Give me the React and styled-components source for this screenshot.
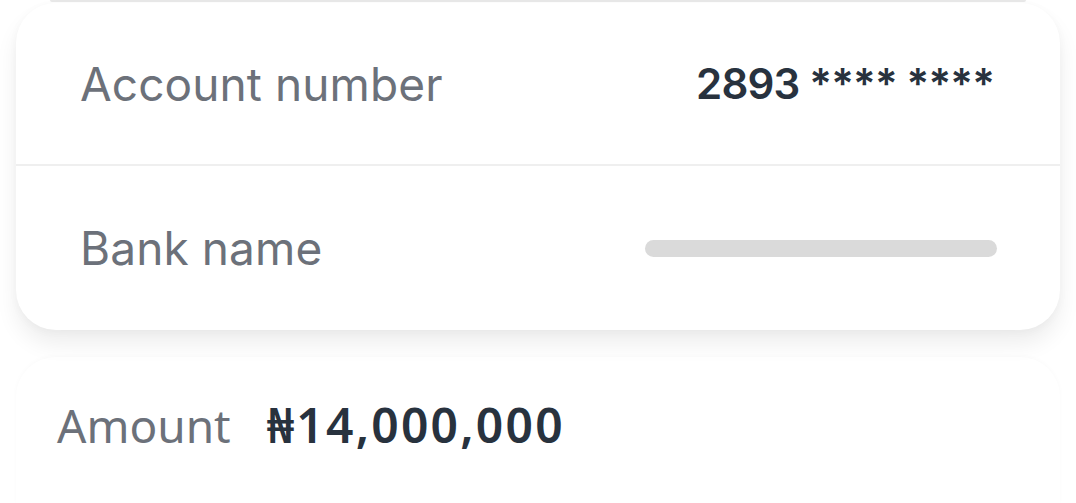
import React from "react";
import styled, { createGlobalStyle } from "styled-components";

const Global = createGlobalStyle`
  html, body {
    margin: 0;
    padding: 0;
    background: #ffffff;
    overflow: hidden;
  }
  body {
    font-family: Inter, "Noto Sans", sans-serif;
  }
`;

const Page = styled.div`
  width: 1076px;
  height: 503px;
  display: flex;
  flex-direction: column;
  box-sizing: border-box;
`;

// bottom edge of the card scrolled off above
const PrevEdge = styled.div`
  height: 2px;
  margin: 0 50px 0 50px;
  background: #e9e9e9;
  border-radius: 0 0 2px 2px;
`;

const Card = styled.div`
  margin: 1px 16px 0 16px;
  background: #ffffff;
  border-radius: 40px;
  box-shadow: 0 14px 22px rgba(0, 0, 0, 0.07), 0 2px 10px rgba(0, 0, 0, 0.03);
  display: flex;
  flex-direction: column;
`;

const Row = styled.div`
  height: ${(p) => p.h}px;
  display: flex;
  align-items: center;
  justify-content: space-between;
  padding: 0 63px 0 64px;
  border-top: ${(p) => (p.divider ? "2px solid #efefef" : "none")};
`;

const Label = styled.span`
  font-family: Inter, sans-serif;
  font-size: 46px;
  font-weight: 400;
  color: #6c717a;
  letter-spacing: 0.1px;
`;

const Value = styled.span`
  font-family: Inter, sans-serif;
  font-size: 42px;
  font-weight: 600;
  color: #28323e;
  letter-spacing: -0.8px;
  margin-right: 3px;
`;

const Skeleton = styled.div`
  width: 352px;
  height: 17px;
  border-radius: 9px;
  background: #dadada;
`;

const AmountCard = styled.div`
  margin: 27px 16px 0 16px;
  flex: 1;
  border-radius: 40px 40px 0 0;
  box-shadow: 0 -1px 5px rgba(0, 0, 0, 0.025);
  display: flex;
  align-items: flex-start;
  padding: 37px 0 0 41px;
  gap: 36px;
`;

const AmountLabel = styled.span`
  font-family: "Noto Sans", sans-serif;
  font-size: 46px;
  font-weight: 400;
  color: #6c717a;
`;

const AmountValue = styled.span`
  font-family: "Noto Sans", sans-serif;
  font-size: 48px;
  font-weight: 600;
  color: #28323e;
  letter-spacing: 2.2px;
  margin-top: -2px;
`;

export default function App() {
  return (
    <Page>
      <Global />
      <PrevEdge />
      <Card>
        <Row h={161}>
          <Label>Account number</Label>
          <Value>2893 **** ****</Value>
        </Row>
        <Row h={164} divider>
          <Label>Bank name</Label>
          <Skeleton />
        </Row>
      </Card>
      <AmountCard>
        <AmountLabel>Amount</AmountLabel>
        <AmountValue>₦14,000,000</AmountValue>
      </AmountCard>
    </Page>
  );
}
